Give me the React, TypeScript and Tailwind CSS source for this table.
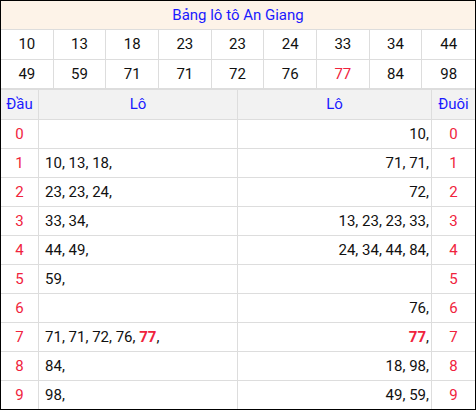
const top = [
  ["10", "13", "18", "23", "23", "24", "33", "34", "44"],
  ["49", "59", "71", "71", "72", "76", "77", "84", "98"],
]

const rows: { head: string[]; tail: string[] }[] = [
  { head: [], tail: ["10"] },
  { head: ["10", "13", "18"], tail: ["71", "71"] },
  { head: ["23", "23", "24"], tail: ["72"] },
  { head: ["33", "34"], tail: ["13", "23", "23", "33"] },
  { head: ["44", "49"], tail: ["24", "34", "44", "84"] },
  { head: ["59"], tail: [] },
  { head: [], tail: ["76"] },
  { head: ["71", "71", "72", "76", "77"], tail: ["77"] },
  { head: ["84"], tail: ["18", "98"] },
  { head: ["98"], tail: ["49", "59"] },
]

const hot = "77"

const Nums = ({ list }: { list: string[] }) => (
  <>
    {list.map((n, i) => (
      <span key={i}>
        {n === hot ? <b className="text-[#f0233d] font-bold">{n}</b> : n},
        {i < list.length - 1 ? " " : ""}
      </span>
    ))}
  </>
)

export default function App() {
  return (
    <div
      className="w-[476px] h-[410px] border border-black bg-white text-[15px] text-[#111]"
      style={{ fontFamily: "Roboto, 'Noto Sans', sans-serif" }}
    >
      {/* title */}
      <div className="h-[29px] flex items-center justify-center bg-[#fdf3e8] border-b border-[#dddddd] text-[#1a1aff]">
        Bảng lô tô An Giang
      </div>

      {/* numbers */}
      {top.map((r, ri) => (
        <div
          key={ri}
          className={`grid grid-cols-9 ${ri === 0 ? "h-[30px] border-b" : "h-[30px] border-b-2"} border-[#dddddd]`}
        >
          {r.map((n, i) => (
            <div
              key={i}
              className={`flex items-center justify-center ${i < 8 ? "border-r border-[#dddddd]" : ""} ${n === hot ? "text-[#f0233d]" : ""}`}
            >
              {n}
            </div>
          ))}
        </div>
      ))}

      {/* head / tail table */}
      <div className="grid grid-cols-[38px_199px_194px_43px]">
        <div className="h-[30px] flex items-center justify-center bg-[#f2f2f2] border-r border-b border-[#dddddd] text-[#1a1aff]">Đầu</div>
        <div className="h-[30px] flex items-center justify-center bg-[#f2f2f2] border-r border-b border-[#dddddd] text-[#1a1aff]">Lô</div>
        <div className="h-[30px] flex items-center justify-center bg-[#f2f2f2] border-r border-b border-[#dddddd] text-[#1a1aff]">Lô</div>
        <div className="h-[30px] flex items-center justify-center bg-[#f2f2f2] border-b border-[#dddddd] text-[#1a1aff]">Đuôi</div>

        {rows.map((r, i) => {
          const last = i === rows.length - 1
          const b = last ? "h-[28px]" : "h-[29px] border-b"
          return (
            <div key={i} className="contents">
              <div className={`${b} flex items-center justify-center border-r border-[#dddddd] text-[#f0233d]`}>{i}</div>
              <div className={`${b} flex items-center pl-[6px] border-r border-[#dddddd]`}>
                <span><Nums list={r.head} /></span>
              </div>
              <div className={`${b} flex items-center justify-end pr-[2px] border-r border-[#dddddd]`}>
                <span><Nums list={r.tail} /></span>
              </div>
              <div className={`${b} flex items-center justify-center border-[#dddddd] text-[#f0233d]`}>{i}</div>
            </div>
          )
        })}
      </div>
    </div>
  )
}
